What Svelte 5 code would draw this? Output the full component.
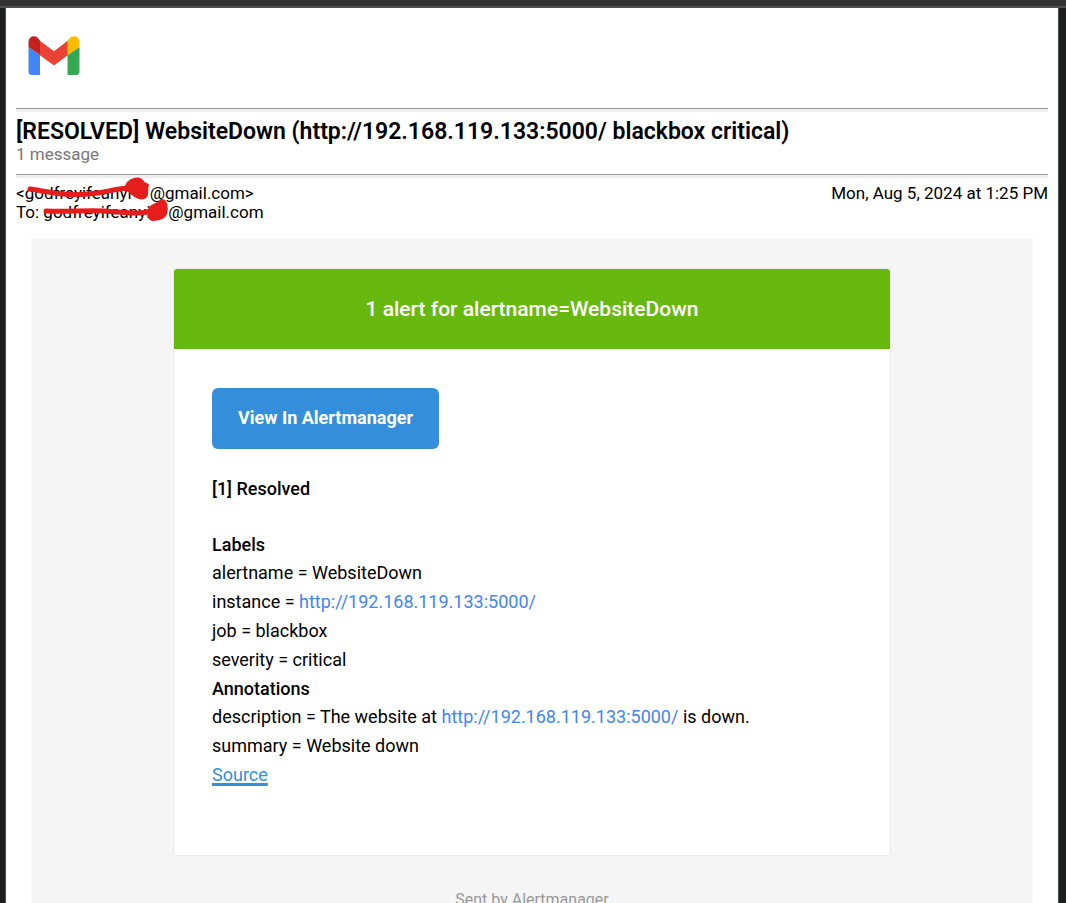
<script>
  const site = 'http://192.168.119.133:5000/';
  const labels = [
    { name: 'alertname', value: 'WebsiteDown' },
    { name: 'instance', link: site },
    { name: 'job', value: 'blackbox' },
    { name: 'severity', value: 'critical' },
  ];
  const annotations = [
    { name: 'description', value: 'The website at ', link: site, after: ' is down.' },
    { name: 'summary', value: 'Website down' },
  ];
</script>

{#snippet entry(item)}
  <li>{item.name} = {item.value ?? ''}{#if item.link}<a class="url" href={item.link}>{item.link}</a>{/if}{item.after ?? ''}</li>
{/snippet}

<div class="viewer">
  <main class="sheet">
    <svg class="logo" viewBox="0 0 52 39" role="img" aria-label="Gmail">
      <path fill="#4285f4" d="M.5 11v24.500Q.5 39 4 39h8V19z" />
      <path fill="#34a853" d="M39.500 19v20H48q3.500 0 3.500-3.500V11z" />
      <path fill="#ea4335" d="M11.500 4.500 26 15.200 40 4.500V19L26 29.500 11.500 19z" />
      <path fill="#c5221f" d="M.5 6C.5 .8 5.500-1.500 9.500 1.600L12 4.700V19L.5 11z" />
      <path fill="#fbbc04" d="M51.500 6c0-5.200-5-7.500-9-4.400l-3 3V19l12-8z" />
    </svg>
    <hr />
    <h1>[RESOLVED] WebsiteDown ({site} blackbox critical)</h1>
    <p class="count">1 message</p>
    <hr />
    <header>
      <div>
        <div>&lt;<span class="hidden-name">godfreyifeanyi<svg class="scribble" viewBox="0 0 128 30" aria-hidden="true">
          <path d="M6 13c20 3 34 7 58 5 20-1 26-6 42-6" />
          <path class="blob" d="M101 13C104 1 116 0 120 7l4 2c-2 6 1 11-4 13-8 2-10-4-19-9z" />
        </svg></span>@gmail.com&gt;</div>
        <div>To: <span class="hidden-name">godfreyifeanyi<svg class="scribble" viewBox="0 0 128 30" aria-hidden="true">
          <path d="M4 16c24 1 38-1 58 0 20 1 34 4 48 0" />
          <path class="blob" d="M107 15c1-7 9-4 12-10 5-1 7 7 5 14-3 6-16 8-17 3z" />
        </svg></span>@gmail.com</div>
      </div>
      <time datetime="2024-08-05T13:25">Mon, Aug 5, 2024 at 1:25 PM</time>
    </header>
    <section class="mail">
      <article>
        <h2>1 alert for alertname=WebsiteDown</h2>
        <div class="content">
          <a class="action" href={site}>View In Alertmanager</a>
          <h3>[1] Resolved</h3>
          <h4>Labels</h4>
          <ul>{#each labels as item}{@render entry(item)}{/each}</ul>
          <h4>Annotations</h4>
          <ul>{#each annotations as item}{@render entry(item)}{/each}</ul>
          <a class="source" href={site}>Source</a>
        </div>
      </article>
      <footer>Sent by Alertmanager</footer>
    </section>
  </main>
</div>

<style>
  :global(body) { margin: 0; background: #1d1e1e; }
  :global(html) { overflow: hidden; }
  .viewer {
    height: 100vh;
    box-sizing: border-box;
    overflow: hidden;
    padding: 0 7px 0 5px;
    background: linear-gradient(#323232 6px, #505050 6px, #505050 8px, #1d1e1e 8px);
    font-family: Roboto, sans-serif;
    color: #000;
  }
  .sheet {
    margin-top: 8px;
    border: solid #505050;
    border-width: 0 1px;
    background: #fff;
    padding: 28px 10px 0;
  }
  .logo { display: block; width: 52px; height: 39px; margin: 0 0 33px 12px; overflow: visible; }
  hr { height: 4px; margin: 0; border: 0; border-top: 1px solid #999; background: #eee; box-sizing: border-box; }
  h1, h2, h3, h4, p, ul { margin: 0; padding: 0; font-weight: 500; }
  h1 { margin-top: 6px; font-size: 23px; font-weight: 600; line-height: 27px; }
  .count { margin-bottom: 10px; font-size: 17px; font-weight: 400; line-height: 19px; color: #777; }
  header { display: flex; justify-content: space-between; margin-top: 6px; font-size: 17px; line-height: 19px; }
  .hidden-name { display: inline-block; position: relative; width: 125px; white-space: nowrap; }
  .scribble { position: absolute; left: -1px; top: -8px; width: 128px; height: 30px; fill: none; stroke: #e71d1d; stroke-width: 5; stroke-linecap: round; }
  .scribble .blob { fill: #e71d1d; stroke-width: 2; stroke-linejoin: round; }
  .mail { margin: 16px 15px 0; padding: 30px 24px 0; background: #f5f5f5; }
  article { max-width: 716px; margin: 0 auto; border: 1px solid #e9e9e9; border-radius: 4px; overflow: hidden; background: #fff; }
  h2 { padding: 24px; background: #68b90f; color: #fff; text-align: center; font-size: 21px; line-height: 32px; }
  .content { padding: 39px 38px 65px; font-size: 18px; line-height: 1.6; }
  .action { display: inline-block; padding: 16px 26px; border-radius: 6px; background: #348eda; color: #fff; font-weight: 700; text-decoration: none; }
  h3 { margin: 26px 0 27px; font-size: 18px; }
  h4 { font-size: 18px; }
  ul { list-style: none; font-weight: 400; }
  .url { color: #4285f4; text-decoration: none; }
  .source { color: #348eda; text-decoration-thickness: 3px; text-decoration-skip-ink: none; }
  footer { padding: 32px 0; text-align: center; font-size: 16px; line-height: 24px; color: #999; }
</style>
